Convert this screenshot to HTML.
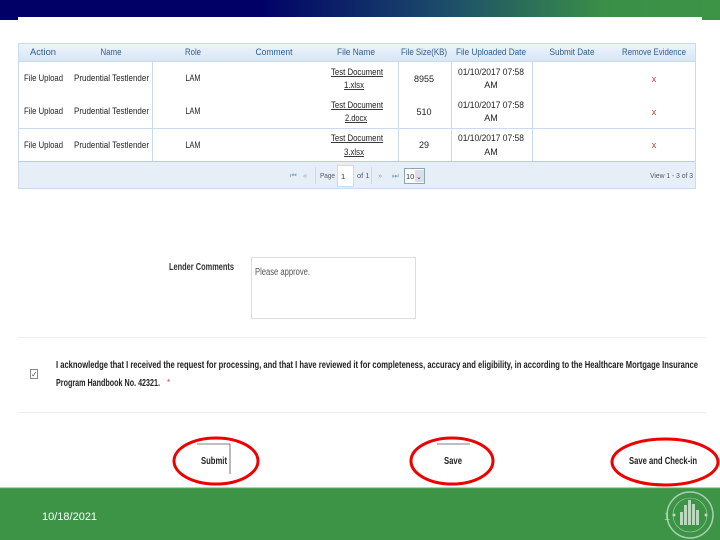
<!DOCTYPE html>
<html><head><meta charset="utf-8"><style>html,body{margin:0;padding:0;background:#fff;}svg{display:block}</style></head><body>
<svg width="720" height="540" viewBox="0 0 720 540" xmlns="http://www.w3.org/2000/svg" font-family="Liberation Sans, sans-serif">
<defs>
<linearGradient id="tb" x1="0" x2="1" y1="0" y2="0">
<stop offset="0" stop-color="#000066"/><stop offset="0.36" stop-color="#000066"/><stop offset="0.62" stop-color="#1c4d6a"/><stop offset="0.84" stop-color="#3a8f47"/><stop offset="1" stop-color="#3d9447"/>
</linearGradient>
<linearGradient id="hd" x1="0" x2="0" y1="0" y2="1"><stop offset="0" stop-color="#eef4fb"/><stop offset="1" stop-color="#d7e6f5"/></linearGradient>
</defs>
<rect x="0" y="0" width="720" height="17" fill="url(#tb)"/>
<rect x="0" y="0" width="18" height="20" fill="#000066"/>
<rect x="702" y="0" width="18" height="20" fill="#3d9447"/>

<rect x="18.5" y="43.5" width="677" height="145" fill="#fff" stroke="#c9dbee"/>
<rect x="19" y="44" width="676" height="17" fill="url(#hd)"/>
<line x1="19" y1="61.5" x2="695" y2="61.5" stroke="#c9dbee"/>
<rect x="19" y="162" width="676" height="26" fill="#e6eff8"/>
<line x1="19" y1="161.5" x2="695" y2="161.5" stroke="#b9cde2"/>
<line x1="19" y1="128.5" x2="695" y2="128.5" stroke="#c9dbee"/>
<g stroke="#c9dbee">
<line x1="152.5" y1="62" x2="152.5" y2="161"/><line x1="398.5" y1="62" x2="398.5" y2="161"/>
<line x1="451.5" y1="62" x2="451.5" y2="161"/><line x1="532.5" y1="62" x2="532.5" y2="161"/>
</g>
<g font-size="9" fill="#2d5e8e" text-anchor="middle">
<text x="43" y="55" textLength="26" lengthAdjust="spacingAndGlyphs">Action</text>
<text x="111" y="55" textLength="21" lengthAdjust="spacingAndGlyphs">Name</text>
<text x="193" y="55" textLength="16" lengthAdjust="spacingAndGlyphs">Role</text>
<text x="274" y="55" textLength="37" lengthAdjust="spacingAndGlyphs">Comment</text>
<text x="356" y="55" textLength="38" lengthAdjust="spacingAndGlyphs">File Name</text>
<text x="424" y="55" textLength="46" lengthAdjust="spacingAndGlyphs">File Size(KB)</text>
<text x="491" y="55" textLength="70" lengthAdjust="spacingAndGlyphs">File Uploaded Date</text>
<text x="572" y="55" textLength="45" lengthAdjust="spacingAndGlyphs">Submit Date</text>
<text x="654" y="55" textLength="64" lengthAdjust="spacingAndGlyphs">Remove Evidence</text>
</g>
<g font-size="9" fill="#222">
<text x="24" y="81" textLength="39" lengthAdjust="spacingAndGlyphs">File Upload</text>
<text x="74" y="81" textLength="75" lengthAdjust="spacingAndGlyphs">Prudential Testlender</text>
<text x="193" y="81" text-anchor="middle" textLength="15" lengthAdjust="spacingAndGlyphs">LAM</text>
<text x="24" y="114" textLength="39" lengthAdjust="spacingAndGlyphs">File Upload</text>
<text x="74" y="114" textLength="75" lengthAdjust="spacingAndGlyphs">Prudential Testlender</text>
<text x="193" y="114" text-anchor="middle" textLength="15" lengthAdjust="spacingAndGlyphs">LAM</text>
<text x="24" y="148" textLength="39" lengthAdjust="spacingAndGlyphs">File Upload</text>
<text x="74" y="148" textLength="75" lengthAdjust="spacingAndGlyphs">Prudential Testlender</text>
<text x="193" y="148" text-anchor="middle" textLength="15" lengthAdjust="spacingAndGlyphs">LAM</text>
<g text-anchor="middle" text-decoration="underline">
<text x="357" y="75" textLength="52" lengthAdjust="spacingAndGlyphs">Test Document</text>
<text x="354" y="88" textLength="20" lengthAdjust="spacingAndGlyphs">1.xlsx</text>
<text x="357" y="108" textLength="52" lengthAdjust="spacingAndGlyphs" text-decoration="none">Test Document</text>
<text x="356" y="121" textLength="22" lengthAdjust="spacingAndGlyphs">2.docx</text>
<text x="357" y="141" textLength="52" lengthAdjust="spacingAndGlyphs">Test Document</text>
<text x="354" y="155" textLength="20" lengthAdjust="spacingAndGlyphs">3.xlsx</text>
</g>
<g text-anchor="middle">
<text x="424" y="82">8955</text><text x="424" y="115">510</text><text x="424" y="148">29</text>
<text x="491" y="75" textLength="66" lengthAdjust="spacingAndGlyphs">01/10/2017 07:58</text><text x="491" y="88">AM</text>
<text x="491" y="108" textLength="66" lengthAdjust="spacingAndGlyphs">01/10/2017 07:58</text><text x="491" y="121">AM</text>
<text x="491" y="141" textLength="66" lengthAdjust="spacingAndGlyphs">01/10/2017 07:58</text><text x="491" y="155">AM</text>
</g>
<g fill="#c0392b" text-anchor="middle" font-size="9"><text x="654" y="82">x</text><text x="654" y="115">x</text><text x="654" y="148">x</text></g>
</g>
<g font-size="7.5" fill="#8aa4bf">
<text x="290" y="178">⏮</text><text x="303" y="178">«</text>
<line x1="315.5" y1="167" x2="315.5" y2="184" stroke="#c9dbee"/>
<text x="320" y="178" fill="#556" textLength="15" lengthAdjust="spacingAndGlyphs">Page</text>
<rect x="337.5" y="165.5" width="16" height="21" fill="#fff" stroke="#c9dbee"/>
<text x="341" y="179" fill="#333">1</text>
<text x="357" y="178" fill="#556">of 1</text>
<line x1="371.5" y1="167" x2="371.5" y2="184" stroke="#c9dbee"/>
<text x="378" y="178">»</text><text x="392" y="178">⏭</text>
<rect x="404.5" y="168.5" width="20" height="15" fill="#fff" stroke="#8aa"/>
<text x="406" y="179" fill="#333">10</text>
<rect x="415" y="170" width="9" height="12" fill="#dde"/>
<text x="416" y="179" fill="#333" font-size="7">⌄</text>
<text x="693" y="178" fill="#556" text-anchor="end" textLength="43" lengthAdjust="spacingAndGlyphs">View 1 - 3 of 3</text>
</g>

<text x="169" y="270" font-size="10" font-weight="bold" fill="#333" textLength="65" lengthAdjust="spacingAndGlyphs">Lender Comments</text>
<rect x="251.5" y="257.5" width="164" height="61" fill="#fff" stroke="#ddd"/>
<text x="255" y="275" font-size="10" fill="#555" textLength="55" lengthAdjust="spacingAndGlyphs">Please approve.</text>
<line x1="18" y1="337.5" x2="706" y2="337.5" stroke="#eee"/>
<line x1="18" y1="412.5" x2="706" y2="412.5" stroke="#eee"/>
<rect x="30.5" y="369.5" width="7" height="9" fill="#fff" stroke="#888"/>
<text x="31" y="377" font-size="8" fill="#555">✓</text>
<text x="56" y="368" font-size="10" font-weight="bold" fill="#222" textLength="642" lengthAdjust="spacingAndGlyphs">I acknowledge that I received the request for processing, and that I have reviewed it for completeness, accuracy and eligibility, in according to the Healthcare Mortgage Insurance</text>
<text x="56" y="386" font-size="10" font-weight="bold" fill="#222" textLength="104" lengthAdjust="spacingAndGlyphs">Program Handbook No. 42321.</text>
<text x="167" y="385" font-size="8" fill="#d33">*</text>

<g stroke="#555" stroke-width="0.8"><line x1="197" y1="444" x2="230" y2="444"/><line x1="230" y1="444" x2="230" y2="474"/><line x1="437" y1="444" x2="470" y2="444"/></g>
<g font-size="10" font-weight="bold" fill="#222" text-anchor="middle">
<text x="214" y="464" textLength="26" lengthAdjust="spacingAndGlyphs">Submit</text>
<text x="453" y="464" textLength="18" lengthAdjust="spacingAndGlyphs">Save</text>
<text x="663" y="464" textLength="68" lengthAdjust="spacingAndGlyphs">Save and Check-in</text>
</g>
<rect x="0" y="488" width="720" height="52" fill="#3d9447"/>
<line x1="0" y1="488" x2="720" y2="488" stroke="#5aab62"/>
<g fill="none" stroke="#e00" stroke-width="3">
<ellipse cx="216" cy="461" rx="42" ry="23"/>
<ellipse cx="452" cy="461" rx="41" ry="23"/>
<ellipse cx="665" cy="462" rx="53" ry="23"/>
</g>
<text x="42" y="520" font-size="11" fill="#fff">10/18/2021</text>
<text x="664" y="520" font-size="11" fill="#9bc79f">1</text>
<g opacity="0.7">
<circle cx="690" cy="515" r="23" fill="none" stroke="#d8ead9" stroke-width="1.5"/>
<circle cx="690" cy="515" r="17" fill="none" stroke="#d8ead9" stroke-width="0.6"/>
<g fill="#eef6ee"><rect x="684" y="505" width="3" height="20"/><rect x="688" y="500" width="3" height="25"/><rect x="692" y="504" width="3" height="21"/><rect x="680" y="512" width="3" height="13"/><rect x="696" y="510" width="3" height="15"/></g>
<circle cx="674" cy="515" r="1.5" fill="#eef6ee"/><circle cx="706" cy="515" r="1.5" fill="#eef6ee"/>
</g>
</svg>
</body></html>
